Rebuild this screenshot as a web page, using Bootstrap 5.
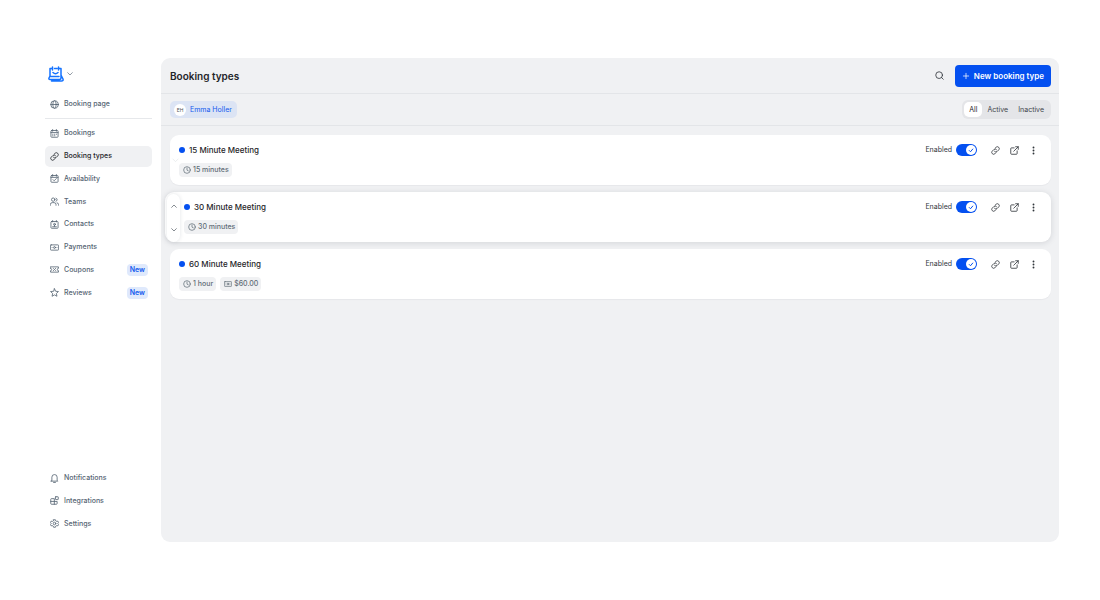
<!DOCTYPE html>
<html lang="en">
<head>
<meta charset="utf-8">
<meta name="viewport" content="width=device-width, initial-scale=1">
<title>Booking types</title>
<link rel="stylesheet" href="https://cdn.jsdelivr.net/npm/bootstrap@5.3.0/dist/css/bootstrap.min.css">
<style>
  :root { --brand: #0450f0; --ink: #1f2529; --muted-ink: #566573; --panel: #f0f1f3; }
  body { font: 500 7px/12px Inter, "Liberation Sans", sans-serif; color: var(--ink); background: #fff; }
  .app-shell { padding: 58px 41px 58px 45px; gap: 9px; }
  .ico { width: 9px; height: 9px; flex: none; fill: none; stroke: currentColor; stroke-width: 2.2; stroke-linecap: round; stroke-linejoin: round; }
  .plain { padding: 0; border: 0; background: none; color: #30363b; display: flex; text-decoration: none; }

  .side { width: 107px; flex: none; padding: 8px 0 7px; }
  .brand-btn { gap: 2px; padding: 0 3px; color: #6b7785; }
  .brand-btn .logo { width: 16px; height: 16px; fill: none; stroke: #1573ff; stroke-width: 3; stroke-linecap: round; stroke-linejoin: round; }
  .brand-btn .ico, .mover .ico { width: 8px; height: 8px; }
  .side-list { display: grid; grid-auto-rows: 1fr; margin: 0; padding: 0; list-style: none; }
  .side-list li { display: flex; padding: 1px 0; }
  .side-main { height: 182px; }
  .side-foot { height: 68px; }
  .side-link { display: flex; align-items: center; gap: 5px; padding: 0 4px 0 5px; border-radius: 5px; color: var(--muted-ink); text-decoration: none; }
  .side-list .side-link { flex: 1; }
  .side-link.active { background: var(--panel); color: var(--ink); }
  .top-link { height: 20px; margin-top: 12px; }
  .side-rule { border-top: 1px solid #e6e8eb; margin: 4px 0 3px; }
  .tag-new { padding: 0 3px; border-radius: 4px; background: #dfe9fc; color: #1259ee; font-weight: 600; }

  .panel { background: var(--panel); border-radius: 9px; }
  .bar { padding: 0 8px 0 9px; border-bottom: 1px solid #e3e5e8; }
  .bar-title { height: 36px; }
  .bar-filter { height: 32px; }
  h1 { font-size: 10px; line-height: 14px; font-weight: 600; }
  .find { margin-right: 11px; }
  .btn-new { --bs-btn-color: #fff; --bs-btn-bg: var(--brand); --bs-btn-hover-color: #fff; --bs-btn-hover-bg: #0344d0; --bs-btn-border-width: 0;
    height: 22px; padding: 0 7px; gap: 4px; border-radius: 4px; font-size: 8px; line-height: 12px; font-weight: 600; }
  .btn-new .ico { width: 8px; height: 8px; }
  .person { height: 17px; padding: 0 5px 0 4px; gap: 4px; border: 0; border-radius: 5px; background: #dce4f4; color: #1259ee; }
  .person .avatar { width: 12px; height: 12px; border-radius: 50%; background: #fff; color: #4b5157; font-size: 5px; line-height: 12px; }
  .seg { height: 19px; padding: 2px; border-radius: 6px; background: #e4e5e8; }
  .seg button { border: 0; background: none; padding: 0 5px; border-radius: 5px; color: #3d444b; }
  .seg button.active { background: #fff; color: var(--ink); }

  .types { padding: 9px 8px; gap: 7px; }
  .type-card { position: relative; margin-left: 1px; padding: 9px 13px 8px 9px; border-radius: 9px; background: #fff; box-shadow: 0 1px 1px rgba(20, 30, 50, .04); }
  .type-card.raised { margin-left: -4px; padding-left: 19px; box-shadow: 0 1px 6px rgba(20, 30, 50, .13); }
  .type-card h2 { font-size: 8px; line-height: 12px; font-weight: 500; gap: 4px; }
  .dot { width: 6px; height: 6px; border-radius: 50%; background: var(--brand); }
  .chips { margin-top: 7px; }
  .chip { height: 14px; padding: 0 3px 0 4px; gap: 2px; border-radius: 4px; background: var(--panel); color: #626d77; }
  .chip .ico { width: 8px; height: 8px; }
  .card-tools { gap: 10px; }
  .card-tools label { color: #30363b; font-weight: 400; gap: 4px; margin-right: 4px; }
  .card-tools .form-check-input { width: 21px; height: 12px; margin: 0; border: 0; border-radius: 6px; box-shadow: none; background-color: #c3c8ce; background-position: left 1px center; background-size: 10px 10px;
    background-image: url("data:image/svg+xml,%3csvg xmlns='http://www.w3.org/2000/svg' viewBox='0 0 20 20'%3e%3ccircle cx='10' cy='10' r='10' fill='%23fff'/%3e%3c/svg%3e"); }
  .card-tools .form-check-input:checked { background-color: var(--brand); background-position: right 1px center;
    background-image: url("data:image/svg+xml,%3csvg xmlns='http://www.w3.org/2000/svg' viewBox='0 0 20 20'%3e%3ccircle cx='10' cy='10' r='10' fill='%23fff'/%3e%3cpath d='M6 10.5l3 3 5-6' fill='none' stroke='%230450f0' stroke-width='2'/%3e%3c/svg%3e"); }
  .mover { position: absolute; left: 2px; top: 2px; bottom: 0; width: 13px; padding: 8px 0; border-radius: 7px; background: #fff; box-shadow: 0 0 4px rgba(20, 30, 50, .12); color: #59616a; }
  .mover .plain { color: inherit; }
  .mover-ghost { position: absolute; left: 1px; top: 21px; color: #e8eaec; }
</style>
</head>
<body>
<svg class="d-none" aria-hidden="true">
  <symbol id="chev-down" viewBox="0 0 24 24"><path d="M5 8l7 7 7-7"/></symbol>
  <symbol id="chev-up" viewBox="0 0 24 24"><path d="M5 16l7-7 7 7"/></symbol>
  <symbol id="globe" viewBox="0 0 24 24"><circle cx="12" cy="12" r="10"/><ellipse cx="12" cy="12" rx="4.500" ry="10"/><path d="M2 12h20"/></symbol>
  <symbol id="calendar" viewBox="0 0 24 24"><rect x="2.500" y="4" width="19" height="18" rx="2"/><path d="M2.500 9.500h19M7 1.500V6M17 1.500V6M7 14h1M12 14h1M17 14h.5M7 18h1M12 18h1"/></symbol>
  <symbol id="cal-check" viewBox="0 0 24 24"><rect x="2.500" y="4" width="19" height="18" rx="2"/><path d="M2.500 9h19M7 1.500V6M17 1.500V6M8 15l3 3 6-6"/></symbol>
  <symbol id="chain" viewBox="0 0 24 24"><path d="M9.500 14.500a5 5 0 0 0 7 0l4.500-4.500a5 5 0 0 0-7-7l-3 3M14.500 9.500a5 5 0 0 0-7 0L3 14a5 5 0 0 0 7 7l3-3"/></symbol>
  <symbol id="people" viewBox="0 0 24 24"><circle cx="8.500" cy="7" r="4.500"/><path d="M1 22v-2a5 5 0 0 1 5-5h5a5 5 0 0 1 5 5v2M16 3a4.500 4.500 0 0 1 0 8.500M19 15.500a5 5 0 0 1 4 5V22"/></symbol>
  <symbol id="contact" viewBox="0 0 24 24"><rect x="2.500" y="4" width="19" height="18" rx="2"/><path d="M7 1.500V5M17 1.500V5M7 18h10M12 14v3"/><circle cx="12" cy="11.500" r="2.500"/></symbol>
  <symbol id="cash" viewBox="0 0 24 24"><rect x="1" y="5" width="22" height="14" rx="2"/><circle cx="12" cy="12" r="2.500"/><path d="M5.500 12h.1M18.500 12h.1"/></symbol>
  <symbol id="coupon" viewBox="0 0 24 24"><path d="M1.500 5h21v4a3 3 0 0 0 0 6v4h-21v-4a3 3 0 0 0 0-6zM9 15l6-6M9 9.500h.1M15 14.500h.1"/></symbol>
  <symbol id="star" viewBox="0 0 24 24"><path d="M12 2l3 6.700 7.500.8-5.500 5 1.500 7.500L12 18.300 5.500 22 7 14.500l-5.500-5L9 8.700z"/></symbol>
  <symbol id="bell" viewBox="0 0 24 24"><path d="M5 17V8.500a7 7 0 0 1 14 0V17l2 2H3zM9.500 22.500h5"/></symbol>
  <symbol id="blocks" viewBox="0 0 24 24"><path d="M11.500 22V7H4a2 2 0 0 0-2 2v11a2 2 0 0 0 2 2h13a2 2 0 0 0 2-2v-5.500H2"/><rect x="14.500" y="2" width="7.500" height="7.500" rx="1"/></symbol>
  <symbol id="gear" viewBox="0 0 24 24"><path d="M9.500 2h5l.8 3 2.700 1.500 3-.8 2 4-2.200 2.300 2.200 2.300-2 4-3-.8-2.700 1.500-.8 3h-5l-.8-3L6 17.500l-3 .8-2-4L3.200 12 1 9.700l2-4 3 .8L8.700 5z"/><circle cx="12" cy="12" r="3.500"/></symbol>
  <symbol id="search" viewBox="0 0 24 24"><circle cx="11" cy="11" r="9"/><path d="M17.500 17.500L22 22"/></symbol>
  <symbol id="plus" viewBox="0 0 24 24"><path d="M12 4v16M4 12h16"/></symbol>
  <symbol id="clock" viewBox="0 0 24 24"><circle cx="12" cy="12" r="10"/><path d="M12 6v6.500l4 2"/></symbol>
  <symbol id="open" viewBox="0 0 24 24"><path d="M11 5H4a2 2 0 0 0-2 2v13a2 2 0 0 0 2 2h13a2 2 0 0 0 2-2v-7M15 2h7v7M22 2L10 14"/></symbol>
  <symbol id="dots" viewBox="0 0 24 24"><g fill="currentColor" stroke="none"><circle cx="12" cy="4" r="2.500"/><circle cx="12" cy="12" r="2.500"/><circle cx="12" cy="20" r="2.500"/></g></symbol>
</svg>

<div class="app-shell d-flex min-vh-100">
  <aside class="side d-flex flex-column">
    <button class="plain brand-btn align-items-center" type="button" aria-label="Account menu">
      <svg class="logo" viewBox="0 0 32 32"><path d="M8 5H4v15l-2 4q-1 3 2 3h19q3 0 3-3V5h-3M13 5h5M5 21h17M26 18l4 8q1 4-3 4H7M9 2v6M21 2v6M10 13q5 5 10 0"/></svg>
      <svg class="ico"><use href="#chev-down"/></svg>
    </button>
    <a class="side-link top-link" href="#"><svg class="ico"><use href="#globe"/></svg>Booking page</a>
    <div class="side-rule"></div>
    <ul class="side-list side-main">
      <li><a class="side-link" href="#"><svg class="ico"><use href="#calendar"/></svg>Bookings</a></li>
      <li><a class="side-link active" href="#" aria-current="page"><svg class="ico"><use href="#chain"/></svg>Booking types</a></li>
      <li><a class="side-link" href="#"><svg class="ico"><use href="#cal-check"/></svg>Availability</a></li>
      <li><a class="side-link" href="#"><svg class="ico"><use href="#people"/></svg>Teams</a></li>
      <li><a class="side-link" href="#"><svg class="ico"><use href="#contact"/></svg>Contacts</a></li>
      <li><a class="side-link" href="#"><svg class="ico"><use href="#cash"/></svg>Payments</a></li>
      <li><a class="side-link" href="#"><svg class="ico"><use href="#coupon"/></svg>Coupons<span class="tag-new ms-auto">New</span></a></li>
      <li><a class="side-link" href="#"><svg class="ico"><use href="#star"/></svg>Reviews<span class="tag-new ms-auto">New</span></a></li>
    </ul>
    <ul class="side-list side-foot mt-auto">
      <li><a class="side-link" href="#"><svg class="ico"><use href="#bell"/></svg>Notifications</a></li>
      <li><a class="side-link" href="#"><svg class="ico"><use href="#blocks"/></svg>Integrations</a></li>
      <li><a class="side-link" href="#"><svg class="ico"><use href="#gear"/></svg>Settings</a></li>
    </ul>
  </aside>

  <main class="panel flex-grow-1">
    <header class="bar bar-title d-flex align-items-center">
      <h1 class="mb-0 me-auto">Booking types</h1>
      <button class="plain find" type="button" aria-label="Search"><svg class="ico"><use href="#search"/></svg></button>
      <button class="btn btn-new d-flex align-items-center" type="button"><svg class="ico"><use href="#plus"/></svg>New booking type</button>
    </header>
    <div class="bar bar-filter d-flex align-items-center justify-content-between">
      <button class="person d-flex align-items-center" type="button"><span class="avatar text-center">EH</span>Emma Holler</button>
      <div class="seg d-flex" role="group" aria-label="Filter by status">
        <button class="active" type="button">All</button>
        <button type="button">Active</button>
        <button type="button">Inactive</button>
      </div>
    </div>

    <div class="types d-flex flex-column">
      <article class="type-card">
        <svg class="ico mover-ghost" aria-hidden="true"><use href="#chev-down"/></svg>
        <div class="d-flex align-items-center justify-content-between">
          <h2 class="d-flex align-items-center mb-0"><span class="dot"></span>15 Minute Meeting</h2>
          <div class="card-tools d-flex align-items-center">
            <label class="d-flex align-items-center form-switch p-0 mb-0">Enabled <input class="form-check-input" type="checkbox" role="switch" checked></label>
            <button class="plain" type="button" aria-label="Copy link"><svg class="ico"><use href="#chain"/></svg></button>
            <a class="plain" href="#" aria-label="Open"><svg class="ico"><use href="#open"/></svg></a>
            <button class="plain" type="button" aria-label="More"><svg class="ico"><use href="#dots"/></svg></button>
          </div>
        </div>
        <div class="chips d-flex gap-1"><span class="chip d-flex align-items-center"><svg class="ico"><use href="#clock"/></svg>15 minutes</span></div>
      </article>

      <article class="type-card raised">
        <div class="mover d-flex flex-column align-items-center justify-content-between">
          <button class="plain" type="button" aria-label="Move up"><svg class="ico"><use href="#chev-up"/></svg></button>
          <button class="plain" type="button" aria-label="Move down"><svg class="ico"><use href="#chev-down"/></svg></button>
        </div>
        <div class="d-flex align-items-center justify-content-between">
          <h2 class="d-flex align-items-center mb-0"><span class="dot"></span>30 Minute Meeting</h2>
          <div class="card-tools d-flex align-items-center">
            <label class="d-flex align-items-center form-switch p-0 mb-0">Enabled <input class="form-check-input" type="checkbox" role="switch" checked></label>
            <button class="plain" type="button" aria-label="Copy link"><svg class="ico"><use href="#chain"/></svg></button>
            <a class="plain" href="#" aria-label="Open"><svg class="ico"><use href="#open"/></svg></a>
            <button class="plain" type="button" aria-label="More"><svg class="ico"><use href="#dots"/></svg></button>
          </div>
        </div>
        <div class="chips d-flex gap-1"><span class="chip d-flex align-items-center"><svg class="ico"><use href="#clock"/></svg>30 minutes</span></div>
      </article>

      <article class="type-card">
        <div class="d-flex align-items-center justify-content-between">
          <h2 class="d-flex align-items-center mb-0"><span class="dot"></span>60 Minute Meeting</h2>
          <div class="card-tools d-flex align-items-center">
            <label class="d-flex align-items-center form-switch p-0 mb-0">Enabled <input class="form-check-input" type="checkbox" role="switch" checked></label>
            <button class="plain" type="button" aria-label="Copy link"><svg class="ico"><use href="#chain"/></svg></button>
            <a class="plain" href="#" aria-label="Open"><svg class="ico"><use href="#open"/></svg></a>
            <button class="plain" type="button" aria-label="More"><svg class="ico"><use href="#dots"/></svg></button>
          </div>
        </div>
        <div class="chips d-flex gap-1"><span class="chip d-flex align-items-center"><svg class="ico"><use href="#clock"/></svg>1 hour</span><span class="chip d-flex align-items-center"><svg class="ico"><use href="#cash"/></svg>$60.00</span></div>
      </article>
    </div>
  </main>
</div>
<script src="https://cdn.jsdelivr.net/npm/bootstrap@5.3.0/dist/js/bootstrap.bundle.min.js"></script>
</body>
</html>
